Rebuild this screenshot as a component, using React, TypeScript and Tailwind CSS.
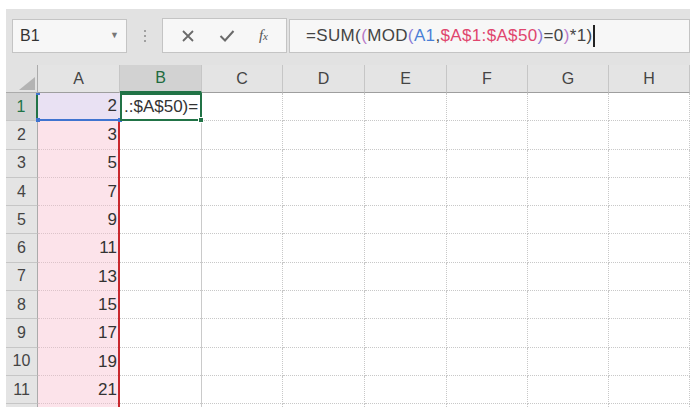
import React from 'react';

const COLS = [
  { key: 'A', w: 'w-[82px]' },
  { key: 'B', w: 'w-[82px]' },
  { key: 'C', w: 'w-[81px]' },
  { key: 'D', w: 'w-[82px]' },
  { key: 'E', w: 'w-[82px]' },
  { key: 'F', w: 'w-[81px]' },
  { key: 'G', w: 'w-[81px]' },
  { key: 'H', w: 'w-[81px]' },
];

const VALUES = [2, 3, 5, 7, 9, 11, 13, 15, 17, 19, 21];

const font = { fontFamily: '"Liberation Sans", "Noto Sans CJK JP", sans-serif' };

function Corner() {
  return (
    <div className="w-[32px] h-[28px] shrink-0 bg-[#e2e2e2] border-r border-b border-[#ababab] relative">
      <svg className="absolute right-[2px] bottom-[2px]" width="16" height="13" viewBox="0 0 16 13">
        <polygon points="16,0 16,13 0,13" fill="#b3b3b3" />
      </svg>
    </div>
  );
}

function Toolbar() {
  return (
    <div className="h-[56px] flex items-start pt-[10px] pl-[6px] bg-[#e2e2e2]">
      {/* Name box */}
      <div className="w-[115px] h-[34px] bg-[#f7f7f7] border border-[#c4c4c4] flex items-center justify-between px-[7px]">
        <span className="text-[16px] text-[#333]">B1</span>
        <span className="text-[9px] text-[#777]">▼</span>
      </div>
      {/* Separator dots */}
      <div className="w-[35px] h-[34px] flex flex-col items-center justify-center gap-[3px]">
        <span className="w-[2px] h-[2px] bg-[#a0a0a0]" />
        <span className="w-[2px] h-[2px] bg-[#a0a0a0]" />
        <span className="w-[2px] h-[2px] bg-[#a0a0a0]" />
      </div>
      {/* Buttons */}
      <div className="w-[125px] h-[35px] bg-[#f7f7f7] border border-[#c4c4c4] flex items-center justify-around px-[6px] mt-[-1px]">
        <svg width="14" height="14" viewBox="0 0 14 14">
          <path d="M2 2 L12 12 M12 2 L2 12" stroke="#6a6a6a" strokeWidth="1.8" />
        </svg>
        <svg width="16" height="14" viewBox="0 0 16 14">
          <path d="M1.5 7 L6 11.5 L14.5 2" stroke="#6a6a6a" strokeWidth="2" fill="none" />
        </svg>
        <span
          className="text-[15px] text-[#555] italic"
          style={{ fontFamily: '"Liberation Serif", serif' }}
        >
          f<span className="text-[11px]">x</span>
        </span>
      </div>
      {/* Formula box */}
      <div className="ml-[2px] flex-1 h-[34px] bg-[#f7f7f7] border border-[#c4c4c4] flex items-center pl-[16px]">
        <span className="text-[17px] tracking-[0.35px] text-[#444] whitespace-nowrap">
          =SUM(<span className="text-[#b77ac8]">(</span>MOD<span className="text-[#8a7ad8]">(</span>
          <span className="text-[#4a7fd6]">A1</span>,
          <span className="text-[#e0466e]">$A$1:$A$50</span>
          <span className="text-[#8a7ad8]">)</span>=0<span className="text-[#b77ac8]">)</span>*1)
        </span>
        <span className="w-[2px] h-[22px] bg-[#222] ml-[1px]" />
      </div>
    </div>
  );
}

function HeaderRow() {
  return (
    <div className="flex">
      <Corner />
      {COLS.map((c) => (
        <div
          key={c.key}
          className={`${c.w} h-[28px] shrink-0 flex items-center justify-center text-[16px] border-r border-[#c6c6c6] ${
            c.key === 'B'
              ? 'bg-[#d2d2d2] text-[#1f6b40] border-b-2 border-b-[#217346]'
              : 'bg-[#e4e4e4] text-[#444] border-b border-b-[#9e9e9e]'
          }`}
        >
          {c.key}
        </div>
      ))}
    </div>
  );
}

function Row({ n, value }: { n: number; value?: number }) {
  const first = n === 1;
  return (
    <div className="flex h-[28.3px]">
      <div
        className={`w-[32px] shrink-0 flex items-center justify-center text-[16px] border-b border-[#c6c6c6] ${
          first
            ? 'bg-[#d2d2d2] text-[#217346] border-r-2 border-r-[#217346]'
            : 'bg-[#e4e4e4] text-[#444] border-r border-r-[#ababab]'
        }`}
      >
        {value !== undefined ? n : ''}
      </div>
      {/* Column A */}
      {first ? (
        <div className="w-[82px] shrink-0 relative bg-[#e9e1f3] border-b-2 border-[#3f74d0] flex items-center justify-end pr-[3px] text-[17px] text-[#333]">
          2
          <span className="absolute left-[-2px] top-[-2px] w-[4px] h-[4px] bg-[#3f74d0]" />
          <span className="absolute left-[-2px] bottom-[-3px] w-[4px] h-[4px] bg-[#3f74d0]" />
          <span className="absolute right-[-2px] bottom-[-3px] w-[4px] h-[4px] bg-[#3f74d0]" />
        </div>
      ) : (
        <div className="w-[82px] shrink-0 flex border-r-2 border-[#c8282e] bg-[#fce3ea]">
          <div className="flex-1 border-b border-dotted border-[#dcc4ca] flex items-center justify-end pr-[1px] text-[17px] text-[#333]">
            {value}
          </div>
        </div>
      )}
      {/* Column B */}
      {first ? (
        <div className="w-[82px] shrink-0 relative border-2 border-[#217346] flex items-center pl-[2px] text-[17px] text-[#333] whitespace-nowrap">
          .:$A$50)=
          <span className="absolute right-[-4px] bottom-[-4px] w-[6px] h-[6px] bg-[#217346] border border-white" />
        </div>
      ) : (
        <div className="w-[82px] shrink-0 flex border-r border-[#cacaca]">
          <div className="flex-1 border-b border-dotted border-[#c8c8c8]" />
        </div>
      )}
      {COLS.slice(2).map((c) => (
        <div
          key={c.key}
          className={`${c.w} shrink-0 border-b border-r border-dotted border-[#c8c8c8]`}
        />
      ))}
    </div>
  );
}

export default function App() {
  return (
    <div className="w-[698px] h-[419px] bg-white overflow-hidden pt-[9px] pl-[6px]" style={font}>
      <div className="w-[684px]">
        <Toolbar />
        <HeaderRow />
        <div className="h-[314px] overflow-hidden">
          {VALUES.map((v, i) => (
            <Row key={i} n={i + 1} value={v} />
          ))}
          <Row n={12} />
        </div>
      </div>
    </div>
  );
}
